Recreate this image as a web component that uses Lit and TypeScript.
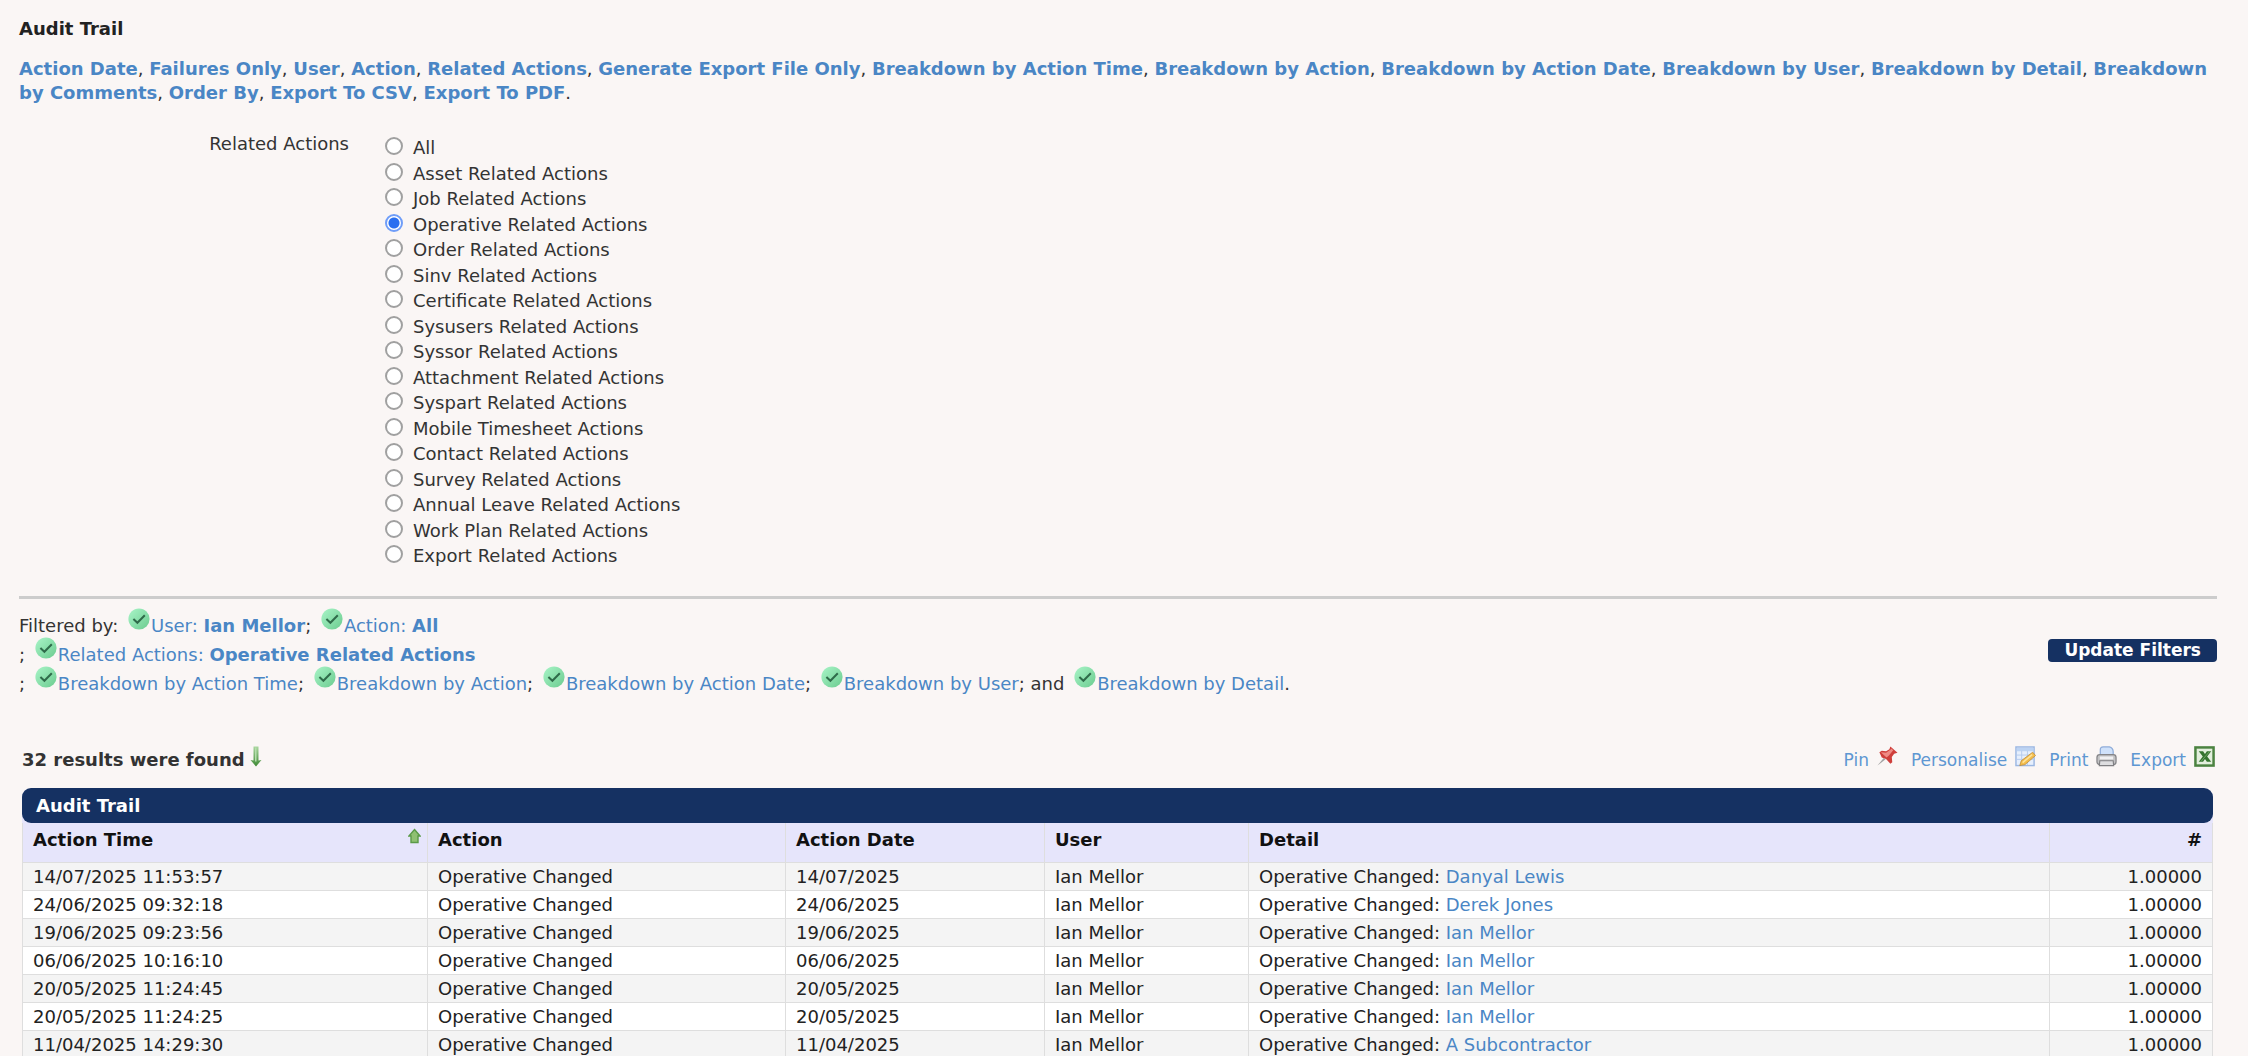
import { LitElement, html, css, svg } from "lit";
import { customElement, state } from "lit/decorators.js";

const FILTER_LINKS = [
  "Action Date", "Failures Only", "User", "Action", "Related Actions", "Generate Export File Only",
  "Breakdown by Action Time", "Breakdown by Action", "Breakdown by Action Date", "Breakdown by User",
  "Breakdown by Detail", "Breakdown by Comments", "Order By", "Export To CSV", "Export To PDF",
];

const RELATED = [
  "All", "Asset Related Actions", "Job Related Actions", "Operative Related Actions", "Order Related Actions",
  "Sinv Related Actions", "Certificate Related Actions", "Sysusers Related Actions", "Syssor Related Actions",
  "Attachment Related Actions", "Syspart Related Actions", "Mobile Timesheet Actions", "Contact Related Actions",
  "Survey Related Actions", "Annual Leave Related Actions", "Work Plan Related Actions", "Export Related Actions",
];

const ROWS = [
  ["14/07/2025 11:53:57", "Danyal Lewis"],
  ["24/06/2025 09:32:18", "Derek Jones"],
  ["19/06/2025 09:23:56", "Ian Mellor"],
  ["06/06/2025 10:16:10", "Ian Mellor"],
  ["20/05/2025 11:24:45", "Ian Mellor"],
  ["20/05/2025 11:24:25", "Ian Mellor"],
  ["11/04/2025 14:29:30", "A Subcontractor"],
];

const tick = html`<svg class="tick" viewBox="0 0 22 22" aria-hidden="true">
  <defs><linearGradient id="g" x1="0" y1="0" x2="1" y2="1">
    <stop offset="0" stop-color="#a9f5c8" /><stop offset="1" stop-color="#6bcb8f" /></linearGradient></defs>
  <circle cx="11" cy="11" r="10.6" fill="url(#g)" />
  <path d="M5.4 11 9.4 14.800l7.400-7.600" fill="none" stroke="#2f6b4a" stroke-width="2" />
</svg>`;

const ICONS = {
  Pin: svg`<path d="M.5 20.500 7 12.500l2 1.500z" fill="#a3a3a3"/>
    <path d="M2.500 6.500 5 5l4.500.5L13 3.500 14 .5l7.500 6.500-3.500 1-2.500 3.500.5 5.500-2 1.500-4.500-5L5 12z" fill="#cf3f3b"/>
    <path d="M4 6.500l5.500.5 4.500-3 1-1.500 2 2-4.500 5.500-2.500 2z" fill="#ee8a84"/>`,
  Personalise: svg`<rect x="1" y="1" width="19" height="19.500" fill="#e6effd" stroke="#9bb7e2" stroke-width="1.500"/>
    <rect x="2" y="2" width="17" height="3.500" fill="#bcd3f3"/>
    <path d="M2 9.500h17M2 14h17M7 5v15M13 5v15" stroke="#b5cbed" fill="none"/>
    <path d="M18.500 6.500 21.500 10 10.500 19.500l-5.500 1 1.500-5z" fill="#f4bd4c" stroke="#bd8a33" stroke-width=".8"/>
    <path d="M18 9 8 17.500" stroke="#fde39a" stroke-width="1.600"/>`,
  Print: svg`<path d="M4.500 10V4q0-3 3-3H14q4 1 4 5v4z" fill="#cfe1fa" stroke="#8eacd9" stroke-width="1.300"/>
    <rect x="1" y="9" width="20" height="10.500" rx="3" fill="#c2c2c4" stroke="#858588" stroke-width="1.300"/>
    <path d="M4 11h14v3H4z" fill="#f0f0f2"/>
    <path d="M4 15.500h14l.5 5h-15z" fill="#dedee0" stroke="#7f7f82" stroke-width="1.200"/>`,
  Export: svg`<rect x="1.500" y="1.500" width="19" height="19" fill="#e3efdd" stroke="#4b8240" stroke-width="2.600"/>
    <path d="M5 5.500h4.500l2 3 2-3H18l-4.200 5.500L18 16.500h-4.500l-2-3-2 3H5L9.200 11z" fill="#35742f"/>
    <path d="M16.500 5.500 7 16.500" fill="none" stroke="#6fa566"/>`,
};

@customElement("app-root")
export class AppRoot extends LitElement {
  @state() private selected = "Operative Related Actions";

  static styles = css`
    :host {
      display: block;
      box-sizing: border-box;
      height: 100vh;
      overflow: hidden;
      border-bottom: 2px solid #fff;
      background: #faf6f5;
      color: #333;
      font-family: Verdana, "DejaVu Sans", sans-serif;
      font-size: 18px;
      line-height: 24px;
    }
    a { color: #4a86c5; text-decoration: none; }
    .page { padding: 17px 31px 0 19px; }
    h1 { margin: 0; font-size: 18px; line-height: 24px; color: #222; }
    .links { margin: 16px 0 0; }
    .links a { font-weight: bold; }
    .tail { white-space: nowrap; }
    .related { display: flex; padding-top: 18px; }
    .related .name { width: 330px; text-align: right; padding-top: 9px; }
    .options {
      display: flex; flex-direction: column; justify-content: space-between;
      height: 433px; margin-left: 36px; padding-top: 12px;
    }
    .option { display: flex; gap: 10px; line-height: 25px; }
    .option input {
      appearance: none; box-sizing: border-box; flex: none; width: 18px; height: 18px; margin: 2px 0 0;
      border: 2px solid #a0a0a0; border-radius: 50%; background: #fff;
    }
    .option input:checked { border-color: #6f9df8; background: radial-gradient(#2a6ff0 0 5px, #fff 6px); }
    hr { margin: 28px 0 0; border: 0; height: 3px; background: #ccc; }
    .applied { display: flex; justify-content: space-between; align-items: center; padding-top: 12px; }
    .applied p { margin: 0; line-height: 29px; }
    .tick { width: 22px; height: 22px; margin: -4px 1px 0 4px; vertical-align: 2px; }
    .update {
      border: 0; border-radius: 4px; margin-bottom: 8px; padding: 0 16px; background: #153162; color: #fff;
      font: bold 17px/23px Verdana, "DejaVu Sans", sans-serif;
    }
    .bar { display: flex; justify-content: space-between; margin-top: 50px; padding: 0 2px 0 3px; }
    .tools { display: flex; gap: 13px; font-size: 17px; }
    .tools a { display: flex; gap: 8px; color: #5e97d2; }
    .found { display: flex; gap: 5px; font-weight: bold; }
    .icon { width: 21px; height: 21px; margin-top: -2px; }
    .down { width: 12px; height: 21px; margin-top: -2px; }
    .results { margin: 16px 4px 0 3px; }
    h2 {
      margin: 0; padding: 0 14px; border-radius: 9px; background: #153162; color: #fff;
      font-size: 18px; line-height: 35px;
    }
    .panel { background: #e6e5fb; border-radius: 9px 9px 0 0; }
    table { width: 100%; table-layout: fixed; border-collapse: collapse; background: #fff; color: #222; }
    th, td { box-sizing: border-box; border: 1px solid #dedede; text-align: left; padding: 0 10px; }
    th { padding-bottom: 6px; background: #e6e5fb; color: #111; line-height: 33px; border-top: 0; }
    td { line-height: 27px; }
    tbody tr:nth-child(odd) { background: #f4f4f4; }
    .time { width: 405px; } .action { width: 358px; } .date { width: 259px; }
    .user { width: 204px; } .count { width: 163px; }
    .num { text-align: right; }
    .sort { display: flex; justify-content: space-between; }
    .up { width: 13px; height: 18px; margin: 4px -4px 0 0; }
  `;

  private chip(label: string, value = "") {
    return html`${tick}<a href="#">${label}${value ? html` <b>${value}</b>` : ""}</a>`;
  }

  private tool(name: keyof typeof ICONS) {
    return html`<a href="#">${name}<svg class="icon" viewBox="0 0 22 22" aria-hidden="true">${ICONS[name]}</svg></a>`;
  }

  private link(label: string) {
    const cut = label.indexOf(" ");
    return cut < 0
      ? html`<a href="#">${label}</a>`
      : html`<a href="#"><span>${label.slice(0, cut)}</span> <span class="tail">${label.slice(cut + 1)}</span></a>`;
  }

  render() {
    return html`<main class="page">
      <h1>Audit Trail</h1>
      <p class="links">${FILTER_LINKS.map((l, i) => html`${this.link(l)}${i < FILTER_LINKS.length - 1 ? ", " : "."}`)}</p>
      <div class="related" role="radiogroup" aria-labelledby="related">
        <div class="name" id="related">Related Actions</div>
        <div class="options">
          ${RELATED.map((r) => html`<label class="option"><input type="radio" name="related" .checked=${this.selected === r}
            @change=${() => (this.selected = r)} />${r}</label>`)}
        </div>
      </div>
      <hr />
      <section class="applied">
        <p>Filtered by: ${this.chip("User:", "Ian Mellor")}; ${this.chip("Action:", "All")}<br />
          ; ${this.chip("Related Actions:", "Operative Related Actions")}<br />
          ; ${this.chip("Breakdown by Action Time")}; ${this.chip("Breakdown by Action")}; ${this.chip("Breakdown by Action Date")};
          ${this.chip("Breakdown by User")}; and ${this.chip("Breakdown by Detail")}.</p>
        <button class="update" type="button">Update Filters</button>
      </section>
      <div class="bar">
        <div class="found">32 results were found<svg class="down" viewBox="0 0 12 21" aria-hidden="true">
          <defs><linearGradient id="d" x1="0" y1="0" x2="0" y2="1">
            <stop offset="0" stop-color="#a9d69f" /><stop offset="1" stop-color="#3f8a35" /></linearGradient></defs>
          <path d="M3.500.5h5v14l3-.5L6 20.500.5 14l3 .5z" fill="url(#d)"/><path d="M5 1.500h1.500v14H5z" fill="#b5deac"/></svg></div>
        <nav class="tools">${this.tool("Pin")}${this.tool("Personalise")}${this.tool("Print")}${this.tool("Export")}</nav>
      </div>
      <section class="results">
        <div class="panel"><h2>Audit Trail</h2></div>
        <table>
          <thead><tr>
            <th class="time"><span class="sort">Action Time<svg class="up" viewBox="0 0 13 18" aria-hidden="true">
              <path d="M6.500 2.500l5.500 6.500H10v6.500H3V9H1z" fill="#8fc072" stroke="#5a9a48" stroke-width="1.400"/></svg></span></th>
            <th class="action">Action</th><th class="date">Action Date</th><th class="user">User</th>
            <th>Detail</th><th class="count num">#</th>
          </tr></thead>
          <tbody>
            ${ROWS.map(([t, who]) => html`<tr><td>${t}</td><td>Operative Changed</td><td>${t.slice(0, 10)}</td>
              <td>Ian Mellor</td><td>Operative Changed: <a href="#">${who}</a></td><td class="num">1.00000</td></tr>`)}
          </tbody>
        </table>
      </section>
    </main>`;
  }
}
